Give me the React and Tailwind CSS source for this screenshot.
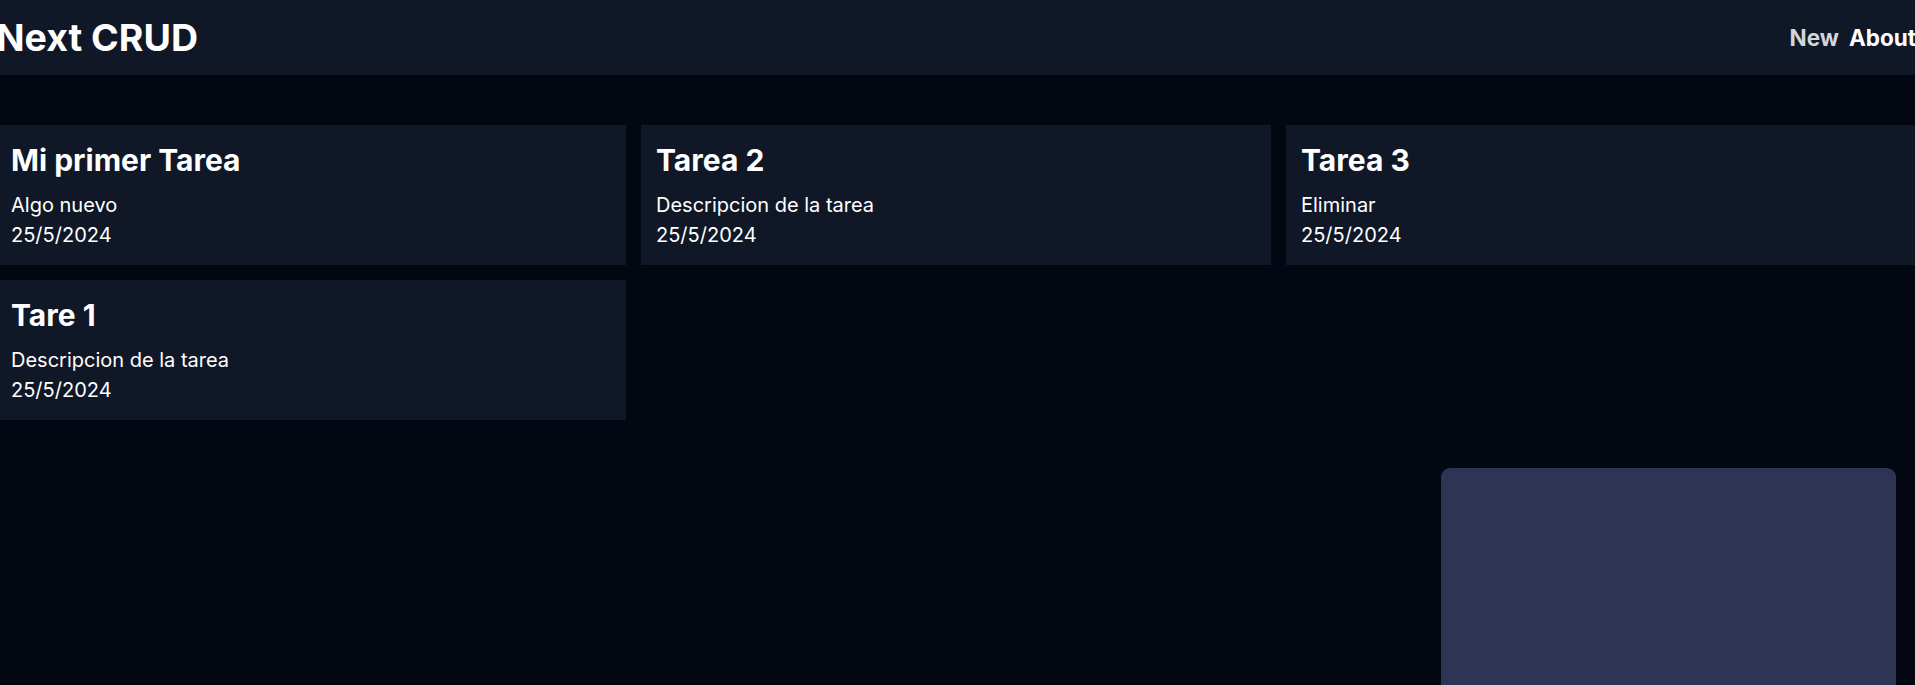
import React from 'react';

const tasks = [
  { id: 1, title: 'Mi primer Tarea', description: 'Algo nuevo', createdAt: '25/5/2024' },
  { id: 2, title: 'Tarea 2', description: 'Descripcion de la tarea', createdAt: '25/5/2024' },
  { id: 3, title: 'Tarea 3', description: 'Eliminar', createdAt: '25/5/2024' },
  { id: 4, title: 'Tare 1', description: 'Descripcion de la tarea', createdAt: '25/5/2024' },
];

const Navbar = () => (
  <nav className="bg-gray-900">
    <div className="flex items-center justify-between py-[15px]">
      <h3 className="text-[37.5px] leading-[45px] font-bold text-white">Next CRUD</h3>
      <ul className="flex gap-[10px] text-[22.5px] leading-[30px] font-bold">
        <li className="text-gray-300">New</li>
        <li className="text-white">About</li>
      </ul>
    </div>
  </nav>
);

const TaskCard = ({ task }) => (
  <div className="bg-gray-900 p-[15px] text-white">
    <h3 className="text-[30px] leading-[40px] font-bold mb-[10px]">{task.title}</h3>
    <p className="text-[20px] leading-[30px]">{task.description}</p>
    <p className="text-[20px] leading-[30px]">{task.createdAt}</p>
  </div>
);

export default function App() {
  return (
    <div className="relative min-h-screen h-[685px] overflow-hidden bg-gray-950 font-['Inter','Noto_Sans',sans-serif]">
      <div className="w-[1920px] -ml-[4px]">
        <Navbar />

        {/* lista de tareas */}
        <section className="grid grid-cols-3 gap-[15px] mt-[50px]">
          {tasks.map(task => (
            <TaskCard key={task.id} task={task} />
          ))}
        </section>
      </div>

      {/* panel flotante abajo a la derecha */}
      <div className="absolute top-[468px] right-[19px] w-[455px] h-[300px] rounded-[9px] bg-[#2e3453]" />
    </div>
  );
}
